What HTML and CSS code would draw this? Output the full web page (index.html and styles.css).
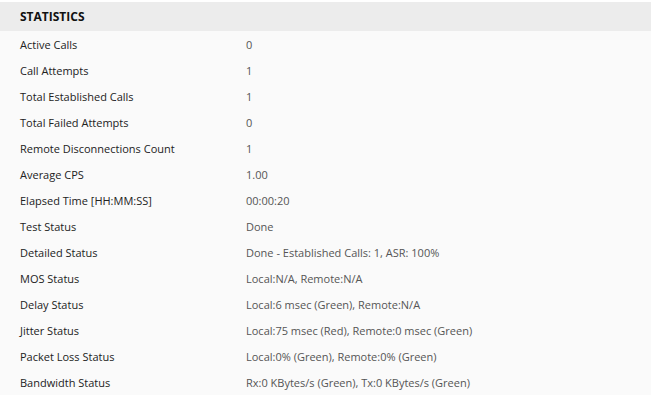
FILE: index.html
```html
<!DOCTYPE html>
<html>
<head>
<meta charset="utf-8">
<link rel="stylesheet" href="styles.css">
</head>
<body>
<div class="panel">
  <div class="panel-header">STATISTICS</div>
  <div class="stats">
    <div class="row"><span class="label">Active Calls</span><span class="value">0</span></div>
    <div class="row"><span class="label">Call Attempts</span><span class="value">1</span></div>
    <div class="row"><span class="label">Total Established Calls</span><span class="value">1</span></div>
    <div class="row"><span class="label">Total Failed Attempts</span><span class="value">0</span></div>
    <div class="row"><span class="label">Remote Disconnections Count</span><span class="value">1</span></div>
    <div class="row"><span class="label">Average CPS</span><span class="value">1.00</span></div>
    <div class="row"><span class="label">Elapsed Time [HH:MM:SS]</span><span class="value">00:00:20</span></div>
    <div class="row"><span class="label">Test Status</span><span class="value">Done</span></div>
    <div class="row"><span class="label">Detailed Status</span><span class="value">Done - Established Calls: 1, ASR: 100%</span></div>
    <div class="row"><span class="label">MOS Status</span><span class="value">Local:N/A, Remote:N/A</span></div>
    <div class="row"><span class="label">Delay Status</span><span class="value">Local:6 msec (Green), Remote:N/A</span></div>
    <div class="row"><span class="label">Jitter Status</span><span class="value">Local:75 msec (Red), Remote:0 msec (Green)</span></div>
    <div class="row"><span class="label">Packet Loss Status</span><span class="value">Local:0% (Green), Remote:0% (Green)</span></div>
    <div class="row"><span class="label">Bandwidth Status</span><span class="value">Rx:0 KBytes/s (Green), Tx:0 KBytes/s (Green)</span></div>
  </div>
</div>
</body>
</html>
```
FILE: styles.css
```css
html, body {
  margin: 0;
  padding: 0;
  background: #ffffff;
}
body {
  font-family: "Open Sans", "Noto Sans", sans-serif;
  font-size: 11px;
}
.panel {
  margin-top: 2px;
  width: 651px;
  background: #fafafa;
}
.panel-header {
  height: 29px;
  display: flex;
  align-items: center;
  padding-left: 20px;
  background: #ececec;
  font-weight: 700;
  font-size: 12px;
  color: #111;
}
.row {
  height: 26px;
  display: grid;
  grid-template-columns: 226px 1fr;
  align-items: center;
  padding-left: 20px;
}
.label {
  color: #222;
}
.value {
  color: #555;
}
```
